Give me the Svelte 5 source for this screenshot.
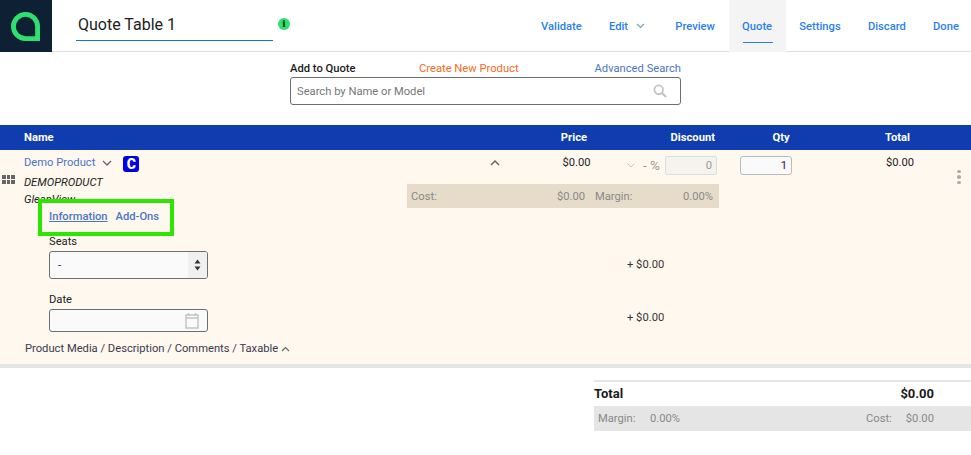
<script lang="ts">
  const nav = [
    { label: 'Validate' },
    { label: 'Edit', caret: true },
    { label: 'Preview' },
    { label: 'Quote', active: true },
    { label: 'Settings' },
    { label: 'Discard' },
    { label: 'Done' }
  ];

  const fields = [
    { label: 'Seats', kind: 'select', value: '-', delta: '+ $0.00' },
    { label: 'Date', kind: 'date', value: '', delta: '+ $0.00' }
  ];
</script>

<div class="page">
  <header class="top">
    <div class="logo">
      <svg width="29" height="29" viewBox="0 0 30 30">
        <path d="M15 2.500a12.500 12.500 0 0 1 12.500 12.500v12.500H15A12.500 12.500 0 0 1 15 2.500Z" fill="none" stroke="#2ee06f" stroke-width="5" />
      </svg>
    </div>
    <div class="title">Quote Table 1</div>
    <span class="info">i</span>
    <nav class="nav">
      {#each nav as item}
        <div class="nav__item" class:nav__item--active={item.active}>
          <span class="nav__label">{item.label}</span>
          {#if item.caret}
            <svg class="nav__caret" width="9" height="6" viewBox="0 0 9 6">
              <path d="M1 1l3.500 3.500L8 1" fill="none" stroke="#7f9fc4" stroke-width="1.200" />
            </svg>
          {/if}
        </div>
      {/each}
    </nav>
  </header>

  <section class="search">
    <div class="search__links">
      <strong>Add to Quote</strong>
      <span class="link-orange">Create New Product</span>
      <span class="link-blue">Advanced Search</span>
    </div>
    <div class="search__box">
      <span>Search by Name or Model</span>
      <svg width="14" height="14" viewBox="0 0 14 14">
        <circle cx="5.700" cy="5.700" r="4.300" fill="none" stroke="#c4c4c4" stroke-width="1.800" />
        <path d="M9 9l4 4" stroke="#c4c4c4" stroke-width="2.200" />
      </svg>
    </div>
  </section>

  <div class="thead">
    <div class="thead__name">Name</div>
    <div class="right">Price</div>
    <div class="right">Discount</div>
    <div class="center">Qty</div>
    <div class="right">Total</div>
  </div>

  <section class="item">
    <div class="item__head">
      <div class="product">
        <div class="product__line">
          <span class="link-blue">Demo Product</span>
          <svg width="10" height="6" viewBox="0 0 10 6">
            <path d="M1 1l4 4 4-4" fill="none" stroke="#666" stroke-width="1.300" />
          </svg>
          <span class="badge">C</span>
        </div>
        <div class="product__model">DEMOPRODUCT</div>
        <div class="product__vendor">GleanView</div>
      </div>
      <div class="price">
        <svg width="10" height="6" viewBox="0 0 10 6">
          <path d="M1 5l4-4 4 4" fill="none" stroke="#666" stroke-width="1.500" />
        </svg>
        <span>$0.00</span>
      </div>
      <div class="discount">
        <svg width="8" height="5" viewBox="0 0 8 5">
          <path d="M.5.500L4 4 7.500.500" fill="none" stroke="#c4c4c4" stroke-width="1" />
        </svg>
        <span class="discount__unit">- %</span>
        <div class="discount__input">0</div>
      </div>
      <div class="qty"><div class="qty__input">1</div></div>
      <div class="total">$0.00</div>
      <div class="kebab"><i></i><i></i><i></i></div>
      <div class="costs">
        <span>Cost:</span>
        <span class="costs__val">$0.00</span>
        <span class="costs__margin">Margin:</span>
        <span class="costs__pct">0.00%</span>
      </div>
    </div>

    <span class="grip">
      {#each Array(6) as _}<i></i>{/each}
    </span>

    <div class="tabs">
      <span class="link-blue tabs__on">Information</span>
      <span class="link-blue">Add-Ons</span>
    </div>
    <div class="highlight"></div>

    <div class="fields">
      {#each fields as f}
        <div class="field" class:field--date={f.kind === 'date'}>
          <div class="field__main">
            <div class="field__label">{f.label}</div>
            <div class="field__input">
              <span class="field__value">{f.value}</span>
              {#if f.kind === 'select'}
                <span class="spin">
                  <svg width="7" height="14" viewBox="0 0 7 14">
                    <path d="M3.500 1.500L6.500 5.500H.5zM3.500 12.500L6.500 8.500H.5z" fill="#333" />
                  </svg>
                </span>
              {:else}
                <svg class="cal" width="14" height="17" viewBox="0 0 14 17">
                  <path d="M1 3h12v13H1zM1 6h12" fill="none" stroke="#c4c4c4" stroke-width="1.500" />
                  <path d="M3.500 1v3M10.500 1v3" stroke="#c4c4c4" stroke-width="1.500" />
                </svg>
              {/if}
            </div>
          </div>
          <div class="field__delta">{f.delta}</div>
        </div>
      {/each}
    </div>

    <div class="more">
      <span>Product Media / Description / Comments / Taxable</span>
      <svg width="9" height="6" viewBox="0 0 9 6">
        <path d="M1 5l3.500-3.500L8 5" fill="none" stroke="#666" stroke-width="1.200" />
      </svg>
    </div>
  </section>

  <section class="summary">
    <div class="summary__total">
      <span>Total</span>
      <span>$0.00</span>
    </div>
    <div class="summary__sub">
      <span class="summary__margin">Margin:</span>
      <span>0.00%</span>
      <span class="summary__cost">Cost:</span>
      <span class="summary__costval">$0.00</span>
    </div>
  </section>
</div>

<style>
  :global(body) {
    margin: 0;
    background: #fff;
  }

  .page {
    width: 971px;
    height: 455px;
    overflow: hidden;
    font-family: Roboto, "Liberation Sans", sans-serif;
    font-size: 11.200px;
    color: #222;
  }

  .link-blue {
    color: #4a76c9;
  }
  .link-orange {
    color: #fb6a22;
  }

  /* header */
  .top {
    display: flex;
    align-items: center;
    height: 51px;
    border-bottom: 1px solid #ddd;
  }
  .logo {
    display: flex;
    align-items: center;
    justify-content: center;
    flex: none;
    width: 52px;
    height: 52px;
    margin-bottom: -1px;
    padding-right: 1px;
    box-sizing: border-box;
    background: #0e2033;
  }
  .title {
    width: 197px;
    height: 30px;
    margin-left: 24px;
    box-sizing: border-box;
    padding: 4px 0 0 2px;
    border-bottom: 1px solid #1a6fe0;
    font-size: 16px;
    line-height: 20px;
    color: #1c1c1c;
  }
  .info {
    display: flex;
    align-items: center;
    justify-content: center;
    flex: none;
    width: 12px;
    height: 12px;
    margin: -3px 0 0 5px;
    border-radius: 50%;
    background: #2ee06f;
    color: #0d2a18;
    font-family: "DejaVu Serif", serif;
    font-size: 9px;
    font-weight: 700;
  }
  .nav {
    display: flex;
    align-items: stretch;
    height: 52px;
    margin: 0 -1.500px -1px auto;
  }
  .nav__item {
    display: flex;
    align-items: center;
    gap: 8px;
    padding: 0 13.600px;
    color: #2b7ff0;
    font-size: 11.200px;
    font-weight: 500;
    position: relative;
  }
  .nav__item--active {
    background: #f4f4f4;
  }
  .nav__item--active::after {
    content: '';
    position: absolute;
    left: 14px;
    right: 13px;
    bottom: 9px;
    height: 1px;
    background: #2b7ff0;
  }
  .nav__caret {
    margin-right: 3px;
  }

  /* search */
  .search {
    width: 391px;
    height: 73px;
    margin-left: 290px;
    box-sizing: border-box;
    padding-top: 10px;
  }
  .search__links {
    display: grid;
    grid-template-columns: 129px 1fr auto;
    line-height: 14px;
    margin-bottom: 1px;
  }
  .search__links strong {
    font-weight: 500;
    color: #1c1c1c;
  }
  .search__box {
    display: flex;
    align-items: center;
    justify-content: space-between;
    height: 28px;
    box-sizing: border-box;
    padding: 0 13px 0 6px;
    border: 1px solid #6e6e6e;
    border-radius: 3px;
    color: #777;
  }

  /* table head */
  .thead {
    display: grid;
    grid-template-columns: 407px 180px 128px 132px 63px;
    align-items: center;
    height: 24px;
    padding-bottom: 1px;
    background: #0f3db0;
    color: #fff;
    font-weight: 700;
  }
  .thead__name {
    padding-left: 24px;
  }
  .right {
    text-align: right;
  }
  .center {
    text-align: center;
  }

  /* line item */
  .item {
    position: relative;
    height: 214px;
    background: #fff8ee;
    border-bottom: 4px solid #e5e5e5;
  }
  .item__head {
    display: grid;
    grid-template-columns: 407px 180px 128px 132px 63px 61px;
    grid-template-rows: 34px 24px;
  }
  .product {
    grid-row: 1 / 3;
    padding: 6px 0 0 24px;
  }
  .product__line {
    display: flex;
    align-items: center;
    height: 13px;
    gap: 7px;
  }
  .badge {
    display: flex;
    align-items: center;
    justify-content: center;
    width: 16px;
    height: 16px;
    margin: 3px 0 0 4px;
    border-radius: 3px;
    background: #0000e6;
    color: #fff;
    font-size: 14px;
    font-weight: 900;
    line-height: 1;
  }
  .product__model,
  .product__vendor {
    font-style: italic;
    line-height: 14px;
    color: #222;
  }
  .product__model {
    margin-top: 7px;
  }
  .product__vendor {
    margin-top: 3px;
  }
  .price {
    display: flex;
    justify-content: space-between;
    align-items: flex-start;
    margin-right: -3.500px;
    padding: 6px 0 0 83px;
    line-height: 14px;
  }
  .price svg {
    margin-top: 4px;
  }
  .discount {
    display: flex;
    justify-content: flex-end;
    align-items: flex-start;
    gap: 5px;
    margin-right: -2px;
    padding-top: 6px;
    color: #999;
    line-height: 19px;
    height: 19px;
  }
  .discount svg {
    margin: 7px 3px 0 0;
  }
  .discount__unit {
    font-size: 13.500px;
  }
  .discount__input {
    width: 52px;
    height: 19px;
    box-sizing: border-box;
    padding-right: 4px;
    border: 1px solid #ddd;
    border-radius: 2px;
    background: #f5f3ee;
    text-align: right;
    line-height: 17px;
  }
  .qty {
    padding: 6px 0 0 25px;
  }
  .qty__input {
    width: 52px;
    height: 19px;
    box-sizing: border-box;
    padding-right: 4px;
    border: 1px solid #bbb;
    border-radius: 3px;
    background: #fafafa;
    color: #3a1050;
    text-align: right;
    line-height: 17px;
  }
  .total {
    margin-right: -4px;
    padding-top: 6px;
    text-align: right;
    line-height: 14px;
  }
  .kebab {
    display: flex;
    flex-direction: column;
    align-items: flex-end;
    gap: 2px;
    padding: 20px 10px 0 0;
  }
  .kebab i {
    width: 4px;
    height: 4px;
    border-radius: 50%;
    background: #aaa;
  }
  .costs {
    grid-column: 2 / 4;
    grid-row: 2;
    display: grid;
    grid-template-columns: 133px 41px 60px 1fr;
    margin-right: -4px;
    padding: 0 6px 0 4px;
    align-items: center;
    background: #e7dcca;
    color: #888;
  }
  .costs__val {
    text-align: right;
  }
  .costs__margin {
    padding-left: 10px;
  }
  .costs__pct {
    text-align: right;
  }

  .grip {
    position: absolute;
    left: 2px;
    top: 25px;
    display: grid;
    grid-template-columns: repeat(3, 4px);
    gap: 0.500px;
  }
  .grip i {
    width: 3.500px;
    height: 4px;
    background: #666;
  }

  .tabs {
    display: flex;
    gap: 8px;
    margin-top: 2px;
    padding-left: 49px;
    line-height: 14px;
    font-weight: 500;
  }
  .tabs__on {
    text-decoration: underline;
  }
  .highlight {
    position: absolute;
    left: 38px;
    top: 49px;
    width: 136px;
    height: 37px;
    box-sizing: border-box;
    border: 4px solid #2de600;
  }

  .fields {
    display: flex;
    flex-direction: column;
  }
  .field {
    display: flex;
    align-items: flex-end;
    height: 55px;
    padding-left: 49px;
  }
  .field--date {
    height: 53px;
  }
  .field__main {
    width: 159px;
  }
  .field__label {
    line-height: 14px;
    margin-bottom: 2px;
  }
  .field__input {
    display: flex;
    align-items: center;
    justify-content: space-between;
    height: 28px;
    box-sizing: border-box;
    border: 1px solid #6e6e6e;
    border-radius: 3px;
    background: #fafafa;
    overflow: hidden;
  }
  .field--date .field__input {
    height: 23px;
  }
  .field__value {
    padding-left: 8px;
  }
  .spin {
    display: flex;
    align-items: center;
    justify-content: center;
    width: 19px;
    height: 100%;
    background: #f0f0f0;
  }
  .cal {
    margin-right: 8px;
  }
  .field__delta {
    margin-left: 419px;
    line-height: 14px;
    padding-bottom: 7px;
    color: #333;
  }

  .more {
    display: flex;
    align-items: center;
    gap: 3px;
    margin-top: 10px;
    padding-left: 25px;
    line-height: 14px;
    color: #3a3a50;
  }

  /* summary */
  .summary {
    width: 377px;
    margin: 12px 0 0 594px;
    border-top: 2px solid #e5e5e5;
  }
  .summary__total {
    display: flex;
    justify-content: space-between;
    width: 340px;
    height: 24px;
    box-sizing: border-box;
    padding-bottom: 2px;
    align-items: center;
    font-size: 13px;
    font-weight: 700;
    color: #1a1a1a;
  }
  .summary__sub {
    display: flex;
    align-items: center;
    height: 25px;
    padding-left: 4px;
    background: #e5e5e5;
    color: #888;
  }
  .summary__margin {
    width: 52px;
  }
  .summary__cost {
    margin-left: 186px;
  }
  .summary__costval {
    margin-left: 14px;
  }
</style>
